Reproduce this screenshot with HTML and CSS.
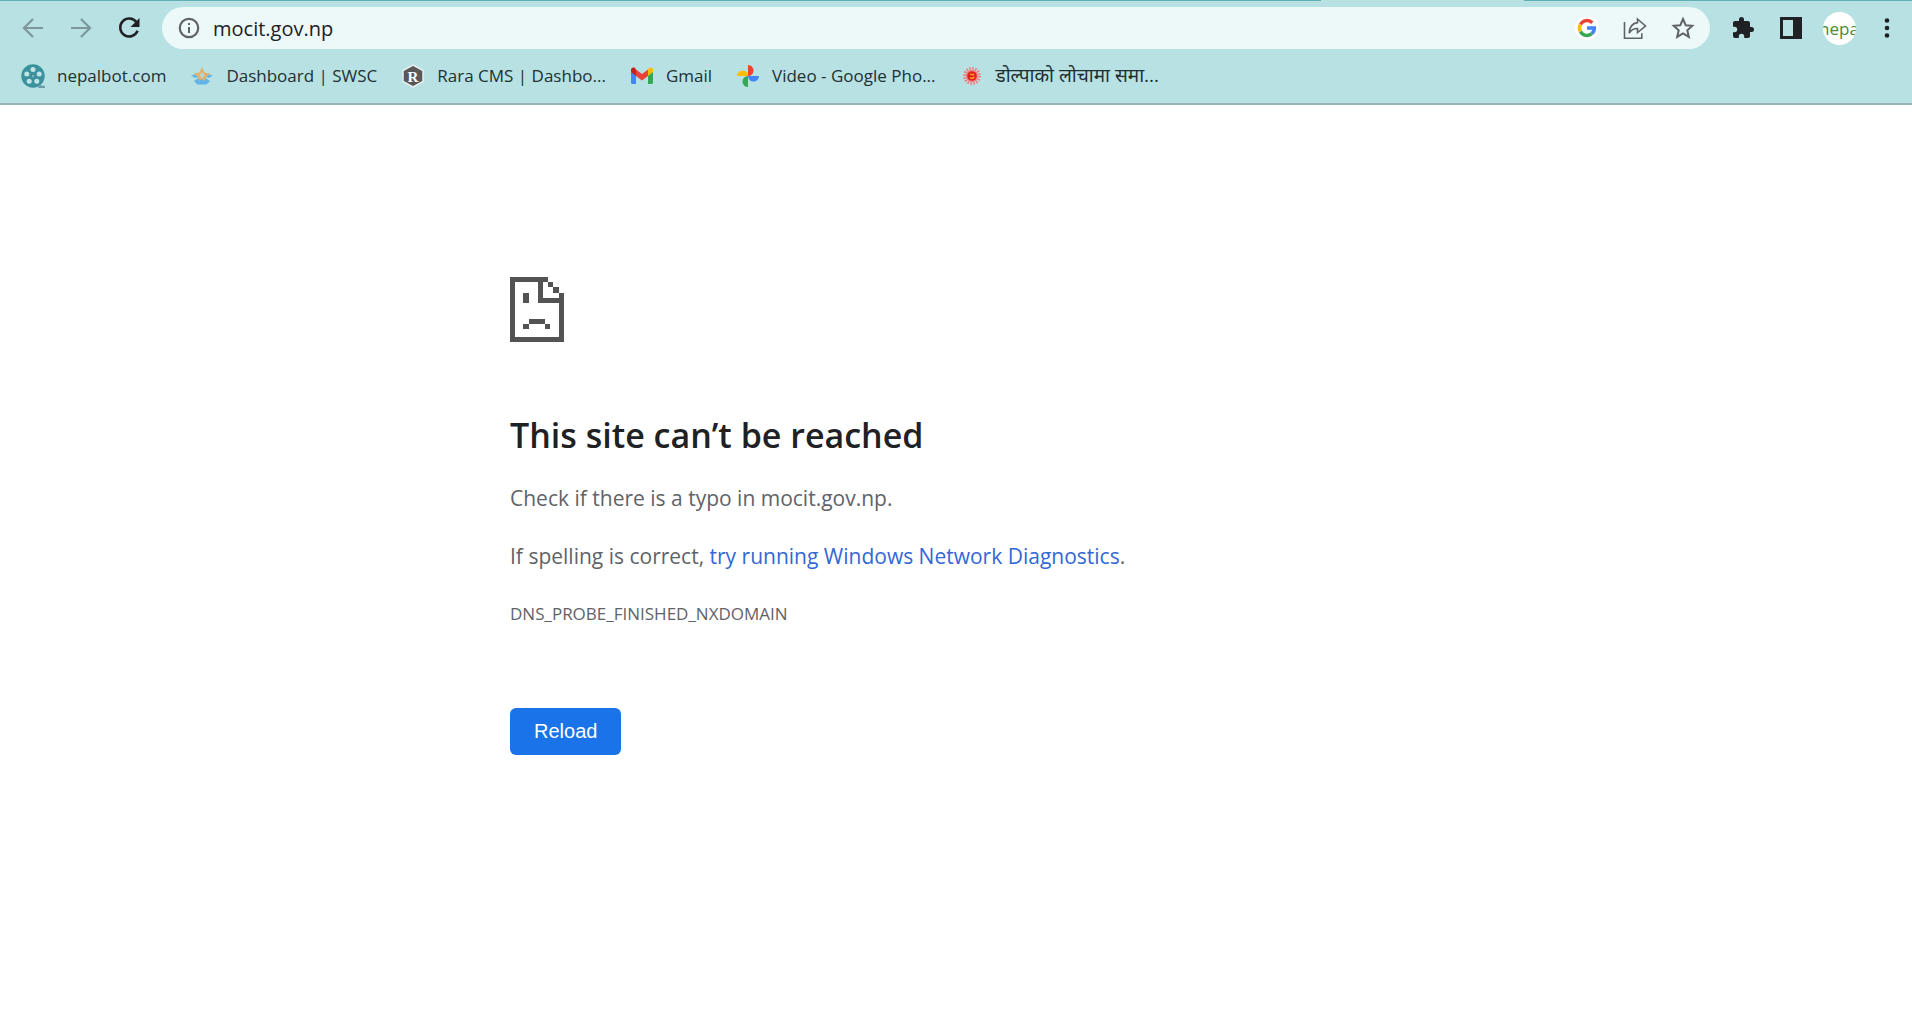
FILE: index.html
```
<!DOCTYPE html>
<html lang="en">
<head>
<meta charset="utf-8">
<meta name="viewport" content="width=device-width, initial-scale=1">
<title>mocit.gov.np</title>
<link rel="stylesheet" href="styles.css">
</head>
<body>
<header class="chrome">
  <div class="tab-edge"><span></span><span class="tab-edge-active"></span><span></span></div>
  <div class="toolbar">
    <div class="button-group">
      <button class="icon-button dim" type="button" aria-label="Back"><svg width="24" height="24" viewBox="0 0 24 24" fill="none" stroke="currentColor" stroke-width="2.200"><path d="M22 12H4M12 3l-9 9 9 9"/></svg></button>
      <button class="icon-button dim" type="button" aria-label="Forward"><svg width="24" height="24" viewBox="0 0 24 24" fill="none" stroke="currentColor" stroke-width="2.200"><path d="M2 12h18M12 3l9 9-9 9"/></svg></button>
      <button class="icon-button" type="button" aria-label="Reload page"><svg width="24" height="24" viewBox="0 0 24 24"><path d="M19.5 6.2A9 9 0 1 0 20.600 14.800" fill="none" stroke="currentColor" stroke-width="2.500"/><path d="M22.500 2v9h-9z" fill="currentColor"/></svg></button>
    </div>
    <form class="omnibox">
      <button class="icon-button soft" type="button" aria-label="View site information"><svg width="22" height="22" viewBox="0 0 22 22"><circle cx="11" cy="11" r="9.200" fill="none" stroke="currentColor" stroke-width="2.200"/><path d="M10 10h2v6h-2zM10 6h2v2h-2z" fill="currentColor"/></svg></button>
      <input class="address" type="text" value="mocit.gov.np" aria-label="Address">
      <div class="button-group">
        <button class="icon-button" type="button" aria-label="Search with Google"><svg width="24" height="24" viewBox="0 0 24 24"><circle cx="12" cy="12" r="12" fill="#fff"/><g fill="none" stroke-width="3.400"><path d="M5.500 8.400A7.400 7.400 0 0 1 17.300 6.700" stroke="#ea4335"/><path d="M5.500 15.600a7.400 7.400 0 0 1 0-7.200" stroke="#fbbc05"/><path d="M16.900 17.600A7.400 7.400 0 0 1 5.500 15.600" stroke="#34a853"/><path d="M12 12h7.400a7.400 7.400 0 0 1-2.500 5.600" stroke="#4285f4"/></g></svg></button>
        <button class="icon-button soft" type="button" aria-label="Share"><svg width="24" height="24" viewBox="0 0 24 24" fill="none" stroke="currentColor" stroke-width="1.600"><path d="M1.500 6v16.200h17.300v-5"/><path d="M14.500 3l8 7-8 6.500v-4c-4 0-6.500 1.500-8.300 4.700C6.500 11 9.500 7.200 14.500 6.600z"/></svg></button>
        <button class="icon-button soft" type="button" aria-label="Bookmark this page"><svg width="24" height="24" viewBox="0 0 24 24" fill="none" stroke="currentColor" stroke-width="2"><path d="M12 3l2.700 6.200 6.600.600-5 4.500 1.500 6.600L12 17.400l-5.800 3.500 1.500-6.600-5-4.500 6.600-.600z"/></svg></button>
      </div>
    </form>
    <div class="button-group">
      <button class="icon-button" type="button" aria-label="Extensions"><svg width="24" height="24" viewBox="0 0 24 24" fill="currentColor"><path d="M20.500 11H19V7a2 2 0 0 0-2-2h-4V3.500a2.500 2.500 0 0 0-5 0V5H4a2 2 0 0 0-2 2v3.800h1.500a2.700 2.700 0 0 1 0 5.400H2V20a2 2 0 0 0 2 2h3.800v-1.500a2.700 2.700 0 0 1 5.400 0V22H17a2 2 0 0 0 2-2v-4h1.500a2.500 2.500 0 0 0 0-5z"/></svg></button>
      <button class="icon-button" type="button" aria-label="Side panel"><svg width="22" height="22" viewBox="0 0 22 22"><path d="M0 0h22v22H0zM3 3v16h10V3z" fill="currentColor" fill-rule="evenodd"/></svg></button>
      <button class="icon-button" type="button" aria-label="Profile"><span class="avatar">nepa</span></button>
      <button class="icon-button" type="button" aria-label="Menu"><svg width="6" height="20" viewBox="0 0 6 20" fill="currentColor"><circle cx="3" cy="2.500" r="2.300"/><circle cx="3" cy="10" r="2.300"/><circle cx="3" cy="17.500" r="2.300"/></svg></button>
    </div>
  </div>
  <nav class="bookmarks" aria-label="Bookmarks">
    <a class="bookmark" href="#"><svg width="24" height="24" viewBox="0 0 24 24"><circle cx="12" cy="12" r="11.700" fill="#3a929d"/><path d="M18 21l6 1v2h-7z" fill="#6b9fa7"/><g fill="#c3e2e6"><circle cx="12" cy="5.500" r="2.500"/><circle cx="18.200" cy="10" r="2.500"/><circle cx="15.800" cy="17.300" r="2.500"/><circle cx="8.200" cy="17.300" r="2.500"/><circle cx="5.800" cy="10" r="2.500"/><circle cx="12" cy="12" r=".8"/></g></svg><span>nepalbot.com</span></a>
    <a class="bookmark" href="#"><svg width="24" height="24" viewBox="0 0 24 24"><path d="M12 3l2.500 5.500 6 1-4.500 4 1.500 5.500-5.500-3-5.500 3L8 13.500l-4.500-4 6-1z" fill="#e2b169"/><path d="M1 11.500l4-1 3 2.500-3 1zM23 11.500l-4-1-3 2.500 3 1zM4 17l4.500-3 .5 3 3-2 3 2 .5-3 4.500 3-3.500 3.500h-9z" fill="#5fb4e8"/><path d="M12 8l2.500 3.500-2.500 3-2.500-3z" fill="#b9d5d0"/></svg><span>Dashboard | SWSC</span></a>
    <a class="bookmark" href="#"><svg width="24" height="24" viewBox="0 0 24 24"><path d="M12 1l10 5.500v11L12 23 2 17.500v-11z" fill="#5b5759" stroke="#e7eeee" stroke-width="1.500"/><text x="12" y="17.500" class="hex-letter">R</text></svg><span>Rara CMS | Dashbo...</span></a>
    <a class="bookmark" href="#"><svg width="24" height="24" viewBox="0 0 24 24"><path d="M1 7v11.500A1.500 1.500 0 0 0 2.500 20H6V9z" fill="#4285f4"/><path d="M18 9v11h3.500a1.500 1.500 0 0 0 1.500-1.500V7z" fill="#34a853"/><path d="M18 5.500V12l5-4V6c0-2.500-2.500-3-4-2z" fill="#fbbc04"/><path d="M6 5.500V12l6 4.500 6-4.500V5.500L12 10z" fill="#ea4335"/><path d="M1 6v2l5 4V5.500L5 4C3.500 3 1 3.500 1 6z" fill="#c5221f"/></svg><span>Gmail</span></a>
    <a class="bookmark" href="#"><svg width="24" height="24" viewBox="0 0 24 24"><path d="M12 1a5.500 5.500 0 0 1 0 11z" fill="#ea4335"/><path d="M23 12a5.500 5.500 0 0 1-11 0z" fill="#4285f4"/><path d="M12 23a5.500 5.500 0 0 1 0-11z" fill="#34a853"/><path d="M1 12a5.500 5.500 0 0 1 11 0z" fill="#fbbc04"/></svg><span>Video - Google Pho...</span></a>
    <a class="bookmark nepali" href="#" lang="ne"><svg width="24" height="24" viewBox="0 0 24 24"><circle cx="12" cy="12" r="7.200" fill="none" stroke="#ef7f80" stroke-width="3.600" stroke-dasharray="1.500 1.327"/><circle cx="12" cy="12" r="6.200" fill="#f08a8a"/><circle cx="12" cy="12" r="4.800" fill="#e3211c"/><path d="M10 10l3 1 1-1M10 13.500l2 1 2.500-1.500" stroke="#f7b32b" fill="none" stroke-width="1.200"/></svg><span>डोल्पाको लोचामा समा...</span></a>
  </nav>
</header>
<main class="error">
  <svg class="sad-page" viewBox="0 0 162 195" role="img" aria-label="Page error" shape-rendering="crispEdges"><path fill="#535353" d="M0 0h114v15H99v48h63v132H0zM15 15v165h132V78H84V15zM114 15h16v16h-16zM130 31h17v16h-17zM147 47h15v16h-15zM40 47h16v31H40zM57 127h48v15H57zM40 142h17v15H40zM105 142h16v15h-16z" fill-rule="evenodd"/></svg>
  <h1>This site can’t be reached</h1>
  <p>Check if there is a typo in mocit.gov.np.</p>
  <p>If spelling is correct, <a href="#">try running Windows Network Diagnostics</a>.</p>
  <p class="code">DNS_PROBE_FINISHED_NXDOMAIN</p>
  <button class="reload" type="button">Reload</button>
</main>
</body>
</html>
```
FILE: styles.css
```
* { box-sizing: border-box; }

body {
  margin: 0;
  background: #fff;
  color: #202124;
  font-family: "Open Sans", "Noto Sans", sans-serif;
}

button { border: 0; padding: 0; cursor: pointer; }

.chrome {
  background: #b8e1e4;
  border-bottom: 2px solid #98b3b9;
}

.tab-edge {
  display: grid;
  grid-template-columns: 1321fr 203fr 388fr;
  height: 1px;
  background: #5fb0b3;
}

.tab-edge-active { background: #b8e1e4; }

.toolbar {
  display: flex;
  align-items: center;
  gap: 13px;
  padding: 6px 5px 0 13px;
}

.button-group { display: flex; gap: 8px; }

.icon-button {
  display: flex;
  flex: none;
  align-items: center;
  justify-content: center;
  width: 40px;
  height: 40px;
  background: none;
  color: #202124;
}

.dim { color: #7c989b; }
.soft { color: #5f6368; }

.omnibox {
  display: flex;
  flex: 1;
  align-items: center;
  gap: 4px;
  height: 42px;
  padding: 0 7px;
  border-radius: 21px;
  background: #edf8f9;
}

.address {
  flex: 1;
  min-width: 0;
  padding: 0;
  border: 0;
  outline: 0;
  background: none;
  color: #202124;
  font: 20px "Open Sans", sans-serif;
}

.avatar {
  display: flex;
  align-items: center;
  justify-content: center;
  width: 33px;
  height: 33px;
  overflow: hidden;
  border-radius: 50%;
  background: #fff;
  color: #4a8a35;
  font: 17px "Open Sans", sans-serif;
}

.bookmarks {
  display: flex;
  gap: 24px;
  padding: 14px 21px 15px;
}

.bookmark {
  display: flex;
  align-items: center;
  gap: 12px;
  height: 25px;
  color: #1d3033;
  font-size: 17px;
  line-height: 25px;
  text-decoration: none;
  white-space: nowrap;
}

.nepali { font-size: 19px; }

.hex-letter {
  fill: #fff;
  font: bold 15px "Liberation Serif", serif;
  text-anchor: middle;
}

.error {
  max-width: 892px;
  margin: 0 auto;
  padding: 172px 0 48px;
  color: #5f6368;
}

.sad-page { display: block; width: 54px; height: 65px; }

h1 {
  margin: 68px 0 23px;
  color: #202124;
  font-size: 34px;
  font-weight: 600;
  line-height: 50px;
}

p {
  margin: 0 0 28px;
  font-size: 21px;
  line-height: 30px;
}

p a { color: #3367d6; text-decoration: none; }

.code { font-size: 17px; }

.reload {
  height: 47px;
  margin-top: 51px;
  padding: 0 24px;
  border-radius: 6px;
  background: #1a73e8;
  color: #fff;
  font: 20px "Liberation Sans", sans-serif;
}
```
